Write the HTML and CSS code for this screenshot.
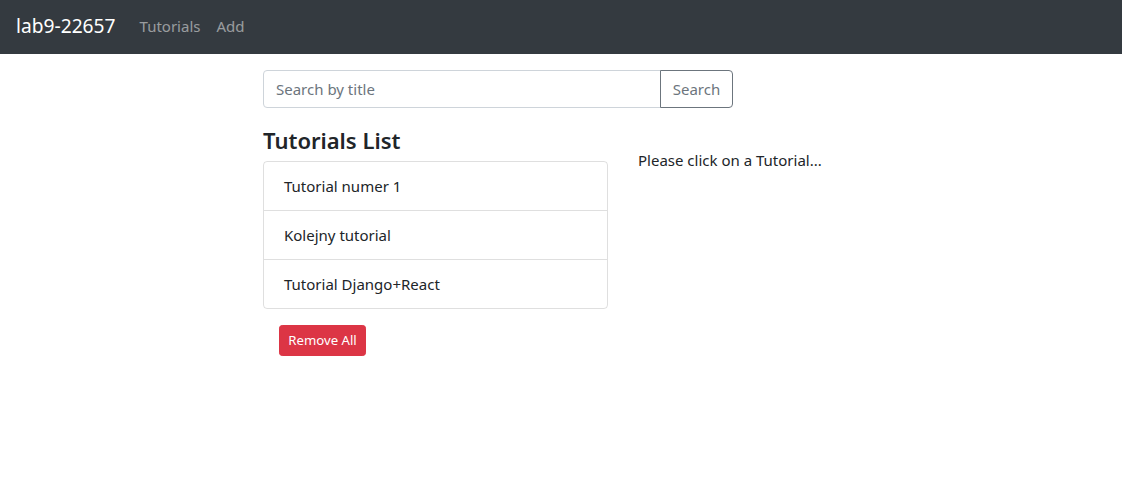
FILE: index.html
```html
<!DOCTYPE html>
<html lang="pl">
<head>
<meta charset="utf-8">
<title>lab9-22657</title>
<link rel="stylesheet" href="styles.css">
</head>
<body>
<nav class="navbar">
  <a class="brand" href="#">lab9-22657</a>
  <div class="nav">
    <a class="nav-link" href="#">Tutorials</a>
    <a class="nav-link" href="#">Add</a>
  </div>
</nav>
<main class="list">
  <div class="col-8">
    <div class="input-group">
      <input class="form-control" type="text" placeholder="Search by title">
      <button class="btn-outline" type="button">Search</button>
    </div>
  </div>
  <div class="col-6">
    <h4 class="title">Tutorials List</h4>
    <ul class="list-group">
      <li class="list-item">Tutorial numer 1</li>
      <li class="list-item">Kolejny tutorial</li>
      <li class="list-item">Tutorial Django+React</li>
    </ul>
    <button class="btn-danger" type="button">Remove All</button>
  </div>
  <div class="col-6">
    <div class="spacer"></div>
    <p class="hint">Please click on a Tutorial...</p>
  </div>
</main>
</body>
</html>
```
FILE: styles.css
```css
* { box-sizing: border-box; }
body {
  margin: 0;
  font-family: "Noto Sans", "Open Sans", sans-serif;
  font-size: 15px;
  line-height: 24px;
  color: #212529;
  background: #fff;
}
.navbar {
  display: flex;
  align-items: center;
  height: 54px;
  padding: 0 16px 2px;
  background: #343a40;
}
.brand {
  color: #fff;
  font-size: 19.2px;
  line-height: 30px;
  text-decoration: none;
  margin-right: 16px;
}
.nav { display: flex; }
.nav-link {
  color: rgba(255,255,255,.5);
  text-decoration: none;
  padding: 0 8px;
}
.list {
  display: flex;
  flex-wrap: wrap;
  width: 750px;
  margin: 16px 0 0 248px;
}
.col-8 { width: 500px; padding: 0 15px; }
.col-6 { width: 375px; padding: 0 15px; }
.input-group {
  display: flex;
  margin-bottom: 16px;
}
.form-control {
  flex: 1;
  min-width: 0;
  height: 38px;
  padding: 6px 12px;
  font: inherit;
  color: #495057;
  border: 1px solid #ced4da;
  border-radius: 4px 0 0 4px;
  outline: none;
}
.form-control::placeholder { color: #6c757d; }
.btn-outline {
  width: 73px;
  height: 38px;
  margin-left: -1px;
  padding: 6px 0;
  font: inherit;
  color: #6c757d;
  background: #fff;
  border: 1px solid #6c757d;
  border-radius: 0 4px 4px 0;
}
.title {
  margin: 0 0 8px;
  padding-top: 2px;
  height: 28.8px;
  font-size: 22px;
  font-weight: 600;
  line-height: 28px;
}
.list-group {
  list-style: none;
  margin: 0;
  padding: 0;
  border: 1px solid rgba(0,0,0,.125);
  border-radius: 4px;
}
.list-item {
  padding: 12px 20px;
  border-bottom: 1px solid rgba(0,0,0,.125);
}
.list-item:last-child { border-bottom: 0; }
.btn-danger {
  width: 87px;
  height: 31px;
  margin: 16px;
  padding: 0;
  font: inherit;
  font-size: 13.2px;
  line-height: 21px;
  color: #fff;
  background: #dc3545;
  border: 1px solid #dc3545;
  border-radius: 3.2px;
}
.spacer { height: 24px; }
.hint { margin: 0 0 16px; }
```
